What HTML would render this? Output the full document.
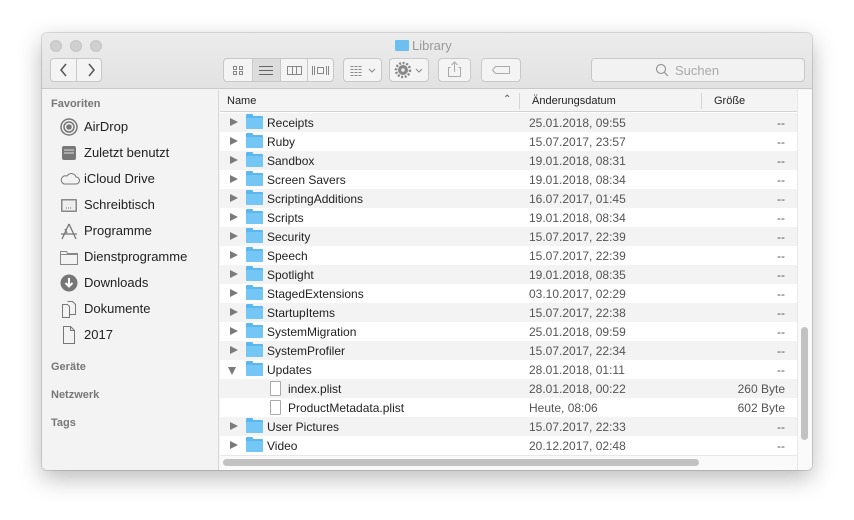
<!DOCTYPE html>
<html><head><meta charset="utf-8"><style>
*{margin:0;padding:0;box-sizing:border-box}
body{width:854px;height:520px;background:#fff;font-family:"Liberation Sans",sans-serif;position:relative;overflow:hidden}
.win{position:absolute;left:42px;top:33px;width:770px;height:437px;border-radius:5px;background:#f4f4f4;box-shadow:0 8px 24px rgba(0,0,0,.28),0 0 0 1px rgba(0,0,0,.12);overflow:hidden}
.tb{position:absolute;left:0;top:0;width:770px;height:56px;background:linear-gradient(#ececec,#e2e2e2);border-bottom:1px solid #c8c8c8}
.dot{position:absolute;top:7px;width:12px;height:12px;border-radius:50%;background:#d0d0d0;border:1px solid #c4c4c4}
.btn{position:absolute;top:25px;height:24px;border:1px solid #c8c8c8;border-radius:4px;background:#f4f4f4}
.title{position:absolute;top:5px;left:353px;font-size:13px;color:#9a9a9a}
.side{position:absolute;left:0;top:57px;width:177px;height:380px;background:#f3f3f3;border-right:1px solid #d8d8d8}
.sh{position:absolute;left:9px;font-size:11px;font-weight:bold;color:#777}
.si{position:absolute;left:42px;font-size:13px;color:#222}
.ic{position:absolute;left:17px}
.list{position:absolute;left:178px;top:57px;width:592px;height:380px;background:#fff}
.hdr{position:absolute;left:0;top:0;width:577px;height:22px;background:#f4f4f4;border-bottom:1px solid #d4d4d4;font-size:11px;color:#222}
.row{position:absolute;left:0;width:577px;height:19px;font-size:12px;color:#222}
.row.g{background:#f3f3f3}
.row .n{position:absolute;left:47px;top:3px}
.row .d{position:absolute;left:309px;top:3px;color:#555}
.row .s{position:absolute;right:12px;top:3px;color:#555}
.tri{position:absolute;left:10px;top:5px;width:0;height:0;border-left:8px solid #7a7a7a;border-top:4.5px solid transparent;border-bottom:4.5px solid transparent}
.tri.o{left:8px;top:7px;border-top:8px solid #7a7a7a;border-left:4.5px solid transparent;border-right:4.5px solid transparent;border-bottom:0}
.fold{position:absolute;left:26px;top:3px;width:17px;height:13px;background:#5ab8ef;border-radius:1px}
.fold:before{content:"";position:absolute;left:0;top:-2px;width:7px;height:3px;background:#5ab8ef;border-radius:1px 1px 0 0}
.fold:after{content:"";position:absolute;left:0;top:2px;width:17px;height:11px;background:#74c6f4;border-radius:1px}
.file{position:absolute;left:50px;top:2px;width:11px;height:15px;border:1px solid #aaa;background:#fff;border-radius:1px}
</style></head><body>
<div class="win">
 <div class="tb">
  <div class="dot" style="left:8px"></div><div class="dot" style="left:28px"></div><div class="dot" style="left:48px"></div>
  <div class="title"><span style="display:inline-block;width:14px;height:11px;background:#6cbfee;border-radius:1px;vertical-align:-1px;margin-right:3px"></span>Library</div>
  <div class="btn" style="left:8px;width:52px"></div>
  <div style="position:absolute;left:34px;top:26px;width:1px;height:22px;background:#c8c8c8"></div>
  <svg style="position:absolute;left:16px;top:29px" width="40" height="16"><path d="M8 2 L3 8 L8 14 M31 2 L36 8 L31 14" stroke="#555" stroke-width="1.5" fill="none"/></svg>
  <div class="btn" style="left:181px;width:111px"></div>
  <div style="position:absolute;left:210px;top:26px;width:28px;height:22px;background:#dcdcdc"></div>
  <div style="position:absolute;left:210px;top:26px;width:1px;height:22px;background:#c8c8c8"></div>
  <div style="position:absolute;left:238px;top:26px;width:1px;height:22px;background:#c8c8c8"></div>
  <div style="position:absolute;left:265px;top:26px;width:1px;height:22px;background:#c8c8c8"></div>
  <svg style="position:absolute;left:181px;top:25px" width="111" height="24" fill="none" stroke="#888" stroke-width="1">
   <rect x="10.5" y="8.5" width="3" height="3"/><rect x="16.5" y="8.5" width="3" height="3"/><rect x="10.5" y="13.5" width="3" height="3"/><rect x="16.5" y="13.5" width="3" height="3"/>
   <path d="M36 8.5h14M36 12.5h14M36 16.5h14" stroke="#666"/>
   <rect x="64.5" y="8.5" width="14" height="8"/><path d="M69.5 8.5v8M73.5 8.5v8"/>
   <path d="M89.5 8v9M91.5 8v9M103.5 8v9M105.5 8v9"/><rect x="94.5" y="9.5" width="6" height="6"/>
  </svg>
  <div class="btn" style="left:301px;width:39px"></div>
  <svg style="position:absolute;left:301px;top:25px" width="39" height="24" fill="none" stroke="#888"><path d="M7.5 8.5h12M7.5 11.5h12M7.5 14.5h12M7.5 17.5h12" stroke-dasharray="3 1"/><path d="M26 11l3 3 3-3"/></svg>
  <div class="btn" style="left:347px;width:40px"></div>
  <svg style="position:absolute;left:347px;top:25px" width="40" height="24"><circle cx="14" cy="12" r="5" fill="#888"/><circle cx="14" cy="12" r="7" fill="none" stroke="#888" stroke-width="2.5" stroke-dasharray="2 1.6"/><circle cx="14" cy="12" r="1.8" fill="#eee"/><path d="M27 11l3 3 3-3" stroke="#888" fill="none"/></svg>
  <div class="btn" style="left:396px;width:33px"></div>
  <svg style="position:absolute;left:396px;top:25px" width="33" height="24" fill="none" stroke="#aaa"><path d="M12.5 9.5h-2v9h12v-9h-2M16.5 4v10M13.5 7l3-3 3 3"/></svg>
  <div class="btn" style="left:439px;width:40px"></div>
  <svg style="position:absolute;left:439px;top:25px" width="40" height="24" fill="none" stroke="#aaa"><path d="M14.5 8.5h14v7h-14l-3-3.5z"/></svg>
  <div class="btn" style="left:549px;width:214px;background:#f2f2f2"></div>
  <svg style="position:absolute;left:613px;top:30px" width="14" height="14" fill="none" stroke="#999" stroke-width="1.2"><circle cx="6" cy="6" r="4.5"/><path d="M9.3 9.3L13 13"/></svg>
  <div style="position:absolute;left:633px;top:30px;font-size:13px;color:#aaa">Suchen</div>
 </div>
 <div class="side">
  <div class="sh" style="top:8px">Favoriten</div>
  <svg class="ic" style="top:27px" width="20" height="20" fill="none" stroke="#777" stroke-width="1.5"><circle cx="10" cy="10" r="8"/><circle cx="10" cy="10" r="5"/><circle cx="10" cy="10" r="2" fill="#777"/></svg>
  <div class="si" style="top:29px">AirDrop</div>
  <svg class="ic" style="top:53px" width="20" height="20"><rect x="3" y="3" width="14" height="14" rx="2" fill="#777"/><path d="M5 7h10M5 10h10" stroke="#ddd"/></svg>
  <div class="si" style="top:55px">Zuletzt benutzt</div>
  <svg class="ic" style="top:79px" width="22" height="20" fill="none" stroke="#777"><path d="M5 15h12a3.5 3.5 0 0 0 0-7a5 5 0 0 0-9-1a4 4 0 0 0-3 8z"/></svg>
  <div class="si" style="top:81px">iCloud Drive</div>
  <svg class="ic" style="top:105px" width="20" height="20"><rect x="2" y="4" width="16" height="13" rx="1" fill="#888"/><rect x="3.5" y="5.5" width="13" height="10" fill="#eee"/><path d="M7 13h6" stroke="#777" stroke-dasharray="1 1"/></svg>
  <div class="si" style="top:107px">Schreibtisch</div>
  <svg class="ic" style="top:131px" width="20" height="20" fill="none" stroke="#777" stroke-width="1.3"><path d="M3 18L10 3M17 18L10 3M2 13h16M6 8l2 4"/></svg>
  <div class="si" style="top:133px">Programme</div>
  <svg class="ic" style="top:157px" width="20" height="20" fill="none" stroke="#888"><path d="M1.5 4.5h6l1 2h10v11h-17z M1.5 7.5h17"/></svg>
  <div class="si" style="top:159px">Dienstprogramme</div>
  <svg class="ic" style="top:183px" width="20" height="20"><circle cx="10" cy="10" r="8.5" fill="#777"/><path d="M10 5v8M6.5 10l3.5 3.5 3.5-3.5" stroke="#fff" stroke-width="2" fill="none"/></svg>
  <div class="si" style="top:185px">Downloads</div>
  <svg class="ic" style="top:209px" width="20" height="20" fill="none" stroke="#777"><path d="M3.5 5.5h5l2 2v11h-7z M8.5 2.5h5l3 3v10h-6"/></svg>
  <div class="si" style="top:211px">Dokumente</div>
  <svg class="ic" style="top:235px" width="20" height="20" fill="none" stroke="#777"><path d="M4.5 1.5h7l4 4v13h-11z M11.5 1.5v4h4"/></svg>
  <div class="si" style="top:237px">2017</div>
  <div class="sh" style="top:271px">Geräte</div>
  <div class="sh" style="top:299px">Netzwerk</div>
  <div class="sh" style="top:327px">Tags</div>
 </div>
 <div class="list">
  <div class="hdr">
   <div style="position:absolute;left:7px;top:5px">Name</div>
   <div style="position:absolute;left:283px;top:4px;font-size:10px;color:#555">&#8963;</div>
   <div style="position:absolute;left:299px;top:3px;width:1px;height:16px;background:#d4d4d4"></div>
   <div style="position:absolute;left:312px;top:5px">Änderungsdatum</div>
   <div style="position:absolute;left:481px;top:3px;width:1px;height:16px;background:#d4d4d4"></div>
   <div style="position:absolute;left:494px;top:5px">Größe</div>
  </div>
  <div id="rows"></div>
  <div style="position:absolute;left:577px;top:0;width:15px;height:380px;background:#fafafa;border-left:1px solid #e8e8e8"></div>
  <div style="position:absolute;left:581px;top:237px;width:7px;height:113px;border-radius:4px;background:#c2c2c2"></div>
  <div style="position:absolute;left:0;top:365px;width:577px;height:15px;background:#fafafa;border-top:1px solid #e8e8e8"></div>
  <div style="position:absolute;left:3px;top:369px;width:476px;height:7px;border-radius:4px;background:#c2c2c2"></div>
 </div>
</div>
<script>
var d=[["Receipts","25.01.2018, 09:55"],["Ruby","15.07.2017, 23:57"],["Sandbox","19.01.2018, 08:31"],["Screen Savers","19.01.2018, 08:34"],["ScriptingAdditions","16.07.2017, 01:45"],["Scripts","19.01.2018, 08:34"],["Security","15.07.2017, 22:39"],["Speech","15.07.2017, 22:39"],["Spotlight","19.01.2018, 08:35"],["StagedExtensions","03.10.2017, 02:29"],["StartupItems","15.07.2017, 22:38"],["SystemMigration","25.01.2018, 09:59"],["SystemProfiler","15.07.2017, 22:34"],["Updates","28.01.2018, 01:11","--","o"],["index.plist","28.01.2018, 00:22","260 Byte","f"],["ProductMetadata.plist","Heute, 08:06","602 Byte","f"],["User Pictures","15.07.2017, 22:33"],["Video","20.12.2017, 02:48"]];
var h="";d.forEach(function(r,i){var t=23+i*19;var f=r[3]=="f";
h+='<div class="row'+(i%2==0?' g':'')+'" style="top:'+t+'px">'+(f?'<div class="file"></div><div class="n" style="left:68px">':'<div class="tri'+(r[3]=="o"?' o':'')+'"></div><div class="fold"></div><div class="n">')+r[0]+'</div><div class="d">'+r[1]+'</div><div class="s">'+(r[2]||"--")+'</div></div>';});
document.getElementById("rows").innerHTML=h;
</script>
</body></html>
